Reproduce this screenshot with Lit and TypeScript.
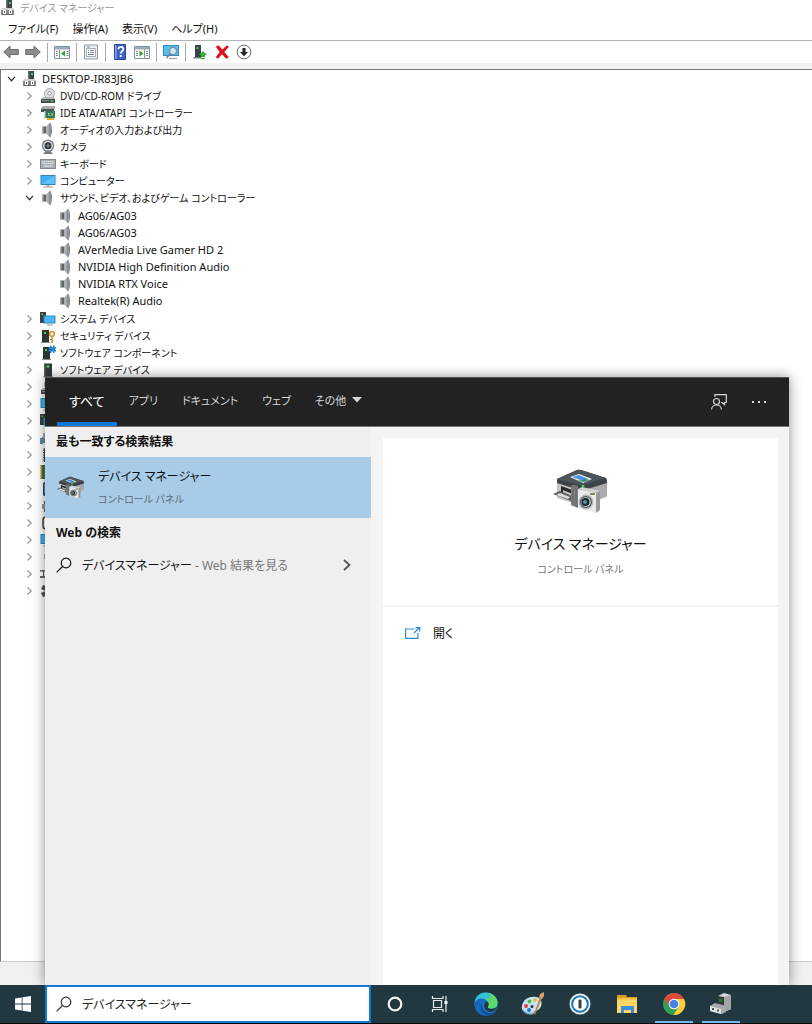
import { LitElement, html, svg, css, type TemplateResult } from "lit";
import { customElement, property, state } from "lit/decorators.js";

const speaker = svg`<path d="M2.500 4.500H6v7H2.500z" fill="#5f6469"/><path d="M2.500 4.500h1.200v7H2.500z" fill="#9a9ea1"/><path d="M6 4.500 10.500.5v15L6 11.500z" fill="#aeb2b5"/><path d="M8.800 2l1.700-1.500v15L8.800 14z" fill="#8b8f93"/><path d="M10.500 1c2 4 2 10 0 14z" fill="#74797d"/>`;
const tower = svg`<path d="M4 1.500h8V15H4z" fill="#33383b"/><path d="M4 1.500h1.500V15H4z" fill="#585e62"/><circle cx="8" cy="4.500" r="1.300" fill="#3fe34a"/><path d="M3 14.500h10v1H3z" fill="#888"/>`;
const monitor = svg`<path d="M.5 2h15v10H.5z" fill="#2f86bd"/><path d="M1.500 3h13v8h-13z" fill="#42b0f5"/><path d="M1.500 11 14.500 3v8z" fill="#62c2fb"/><path d="M6.500 12h3v1.500h-3z" fill="#aaa"/><path d="M3.500 13.500h9.500v1H3.500z" fill="#8b979e"/>`;

const art: Record<string, [string, TemplateResult]> = {
  computer: ["0 0 16 16", svg`<path d="M6 0h6v10H6z" fill="#3d4245"/><path d="M6 0h1.500v10H6z" fill="#666c70"/><rect x="9" y="2" width="2" height="2" fill="#35e04a"/><path d="M2 8h11l1 2H1z" fill="#cfd1d2"/><path d="M1 10h13v5H1z" fill="#84888b"/><path d="M2 14h11v1H2z" fill="#666"/><path d="M3 10h3v4H3zM9 10h3v4H9z" fill="#fff"/><path d="M4 11h1v2H4zM10 11h1v2h-1z" fill="#555"/>`],
  disc: ["0 0 16 16", svg`<circle cx="9.500" cy="5.500" r="5" fill="#dcdedf" stroke="#a7abad"/><circle cx="9.500" cy="5.500" r="1.800" fill="#fff" stroke="#999"/><path d="M3 9h11l1 2H1z" fill="#b4b8ba"/><path d="M1 11h14v4H1z" fill="#4a4f52"/><path d="M2 12h7v1H2z" fill="#888e92"/><circle cx="12" cy="13" r="1" fill="#3de14b"/>`],
  ide: ["0 0 16 16", svg`<path d="M1 3 3 1h12v4H1z" fill="#a9adaf"/><path d="M1 4h13v3H1z" fill="#4e5457"/><path d="M5 6h10v7H5z" fill="#2e7b4f"/><path d="M4 6h1.500v8H4z" fill="#cdd0d1"/><path d="M8 8h5v3H8z" fill="#85bd8f"/><circle cx="10.500" cy="9.500" r="1" fill="#1d5333"/><path d="M7 13h7v2H7z" fill="#e6a92d"/>`],
  speaker: ["0 0 16 16", speaker],
  camera: ["0 0 16 16", svg`<path d="m3 15 2.500-3h5L13 15z" fill="#777c80"/><circle cx="8" cy="6.800" r="6.300" fill="#82878b"/><circle cx="8" cy="6.800" r="4.800" fill="#dfe1e2"/><circle cx="8" cy="6.800" r="3.500" fill="#33383b"/><circle cx="8" cy="6.800" r="1.600" fill="#7c8488"/>`],
  keyboard: ["0 0 16 16", svg`<path d="M0 3h16v10H0z" fill="#80878c"/><path d="M1 4h14v8H1z" fill="#a9b0b4"/><path d="M2 5.500h12M2 7.500h12" stroke="#e3e6e8" stroke-dasharray="1.500 .5"/><path d="M3.500 10h9" stroke="#e3e6e8"/>`],
  monitor: ["0 0 16 16", monitor],
  system: ["0 0 16 16", svg`<path d="M0 1h6v11H0z" fill="#3b4144"/><rect x="1.500" y="2.500" width="1.500" height="1.500" fill="#35e04a"/><path d="M3.500 4.500h12v8h-12z" fill="#2c86bd"/><path d="M4.500 5.500h10v6h-10z" fill="#4bb7fa"/><path d="M7 13.500h6v1H7z" fill="#8b979e"/>`],
  security: ["0 0 16 16", svg`<path d="M2 2h7v12H2z" fill="#2e3336"/><rect x="4" y="4" width="2" height="2" fill="#35e04a"/><path d="M1 14h9v1H1z" fill="#888"/><circle cx="12" cy="6" r="2.300" fill="none" stroke="#d8973a" stroke-width="1.700"/><path d="M11.200 8h1.700v7h-1.700z" fill="#d8973a"/><path d="M10 11h2v1h-2z" fill="#b0741f"/>`],
  component: ["0 0 16 16", svg`<path d="M3 2h7v12H3z" fill="#2e3336"/><rect x="5" y="4" width="2" height="2" fill="#35e04a"/><path d="M2 14h9v1H2z" fill="#888"/><path d="M8.500 2H10V.5h1.500V2H13V.5h1.500V2H16v1.500h-1V5h1v1.500h-1.500V8H13V6.500h-1.500V8H10V6.500H8.500V5h1V3.500h-1z" fill="#2584cf"/>`],
  tower: ["0 0 16 16", tower],
  board: ["0 0 16 16", svg`<path d="M1 1h14v14H1z" fill="#3c7a46"/><path d="M1 1v14" stroke="#d6aa43" stroke-width="2" stroke-dasharray="1.500 1"/>`],
  chip: ["0 0 16 16", svg`<path d="M3 1h10v14H3z" fill="#484d50"/><path d="M3 1v14" stroke="#e4e6e7" stroke-width="2" stroke-dasharray="1.500 1"/>`],
  printer: ["0 0 16 16", svg`<path d="M2 7h12v6H2z" fill="#7b8083"/><path d="M3 3h8v5H3z" fill="#9fb4c1"/><path d="M0 8h3v6H0z" fill="#5d8da5"/>`],
  phone: ["0 0 16 16", svg`<rect x="3" y="1" width="10" height="14" rx="1.500" fill="#46525a"/><path d="M4.500 3h7v9h-7z" fill="#5eb5eb"/>`],
  mouse: ["0 0 16 16", svg`<path d="M4 3h8v11H4z" fill="#575b5e"/><path d="M2 6h3v5H2z" fill="#999"/>`],
  curve: ["0 0 16 16", svg`<rect x="3" y="2" width="10" height="12" rx="3" fill="#fff" stroke="#444" stroke-width="1.500"/>`],
  usb: ["0 0 16 16", svg`<path d="M4 5h2v5H4z" fill="#aaa"/><path d="M9 3h3v12H9z" fill="#aaa"/>`],
  drive: ["0 0 16 16", svg`<path d="M0 4h12v1.500H0zM0 10h14v2H0z" fill="#666b6e"/><path d="M3.500 5v5" stroke="#555"/>`],
  gear: ["0 0 16 16", svg`<path d="M3 2 1 6l4 2-4 2 2 4 6-2V4z" fill="#4f5356"/><circle cx="7" cy="8" r="2.500" fill="#fff"/>`],

  back: ["0 0 16 16", svg`<path d="M.7 8 7 2v3.500h8.300v5H7V14z" fill="#8d8d8d" stroke="#6c6c6c"/>`],
  forward: ["0 0 16 16", svg`<path d="M15.300 8 9 2v3.500H.7v5H9V14z" fill="#8d8d8d" stroke="#6c6c6c"/>`],
  treepane: ["0 0 16 16", svg`<path d="M.5 2.500h15v12H.5z" fill="#f8fafb" stroke="#87939b"/><path d="M1 3h14v2.500H1z" fill="#9eacb6"/><path d="M5.500 5.500V14" stroke="#87939b"/><path d="M2 7.500h2M2 9.500h2M2 11.500h2M12.500 7.500h2M12.500 9.500h2M12.500 11.500h2" stroke="#7b8b96"/><path d="m7 9.500 4-3v6z" fill="#35a421"/>`],
  actionpane: ["0 0 16 16", svg`<path d="M.5 2.500h15v12H.5z" fill="#f8fafb" stroke="#87939b"/><path d="M1 3h14v2.500H1z" fill="#9eacb6"/><path d="M10.500 5.500V14" stroke="#87939b"/><path d="M2 7.500h2M2 9.500h2M2 11.500h2M12 7.500h2M12 9.500h2M12 11.500h2" stroke="#7b8b96"/><path d="m9.500 9.500-4-3v6z" fill="#35a421"/>`],
  properties: ["0 0 16 16", svg`<path d="M1.500 1h13v14h-13z" fill="#eef1f3" stroke="#8f999f"/><path d="M3.500 4.500h9v8h-9z" fill="#fff" stroke="#a4aeb5"/><path d="M4 3h3M5 6.500h1M7 6.500h4M5 8.500h1M7 8.500h4M5 10.500h6" stroke="#6d8698"/>`],
  help: ["0 0 16 16", svg`<path d="M2.500.5h11v15h-11z" fill="#3f63c4" stroke="#2a479b"/><path d="M3 1h1.500v14H3z" fill="#8aa2e4"/><path d="M6.500 5.200c0-3.400 5-3 4.800 0 0 2-2.500 2-2.500 4.300" fill="none" stroke="#fff" stroke-width="1.800"/><path d="M7.800 11h2v2h-2z" fill="#fff"/>`],
  scan: ["0 0 16 16", svg`<path d="M0 1h16v11H0z" fill="#3189bd"/><path d="M1 2h14v9H1z" fill="#5abdf2"/><circle cx="10" cy="7" r="3.500" fill="#c6e7fa" stroke="#7d8990" stroke-width="1.200"/><path d="m7.500 9.500-4 4.500" stroke="#7a7f82" stroke-width="1.600"/><path d="M6 14.500h8" stroke="#8b979e"/>`],
  update: ["0 0 16 16", svg`<path d="M3 1h6v12H3z" fill="#3d4346"/><circle cx="5.500" cy="4" r="1.100" fill="#45e152"/><path d="M1.500 13h8v1.500h-8z" fill="#777"/><path d="m11 7 4 4h-2v2H9v-2H7zM9 14h4v1.200H9z" fill="#2bb634"/>`],
  remove: ["0 0 14 14", svg`<path d="M1.500 2.500 4 1l3.200 3.800L11.500 1l1.500 1.500L9 7l4 4.500-2.500 1.500L7 9l-3.500 4-2-1.500L5 7z" fill="#e0101e"/>`],
  disable: ["0 0 16 16", svg`<circle cx="8" cy="8" r="6.900" fill="#fafafa" stroke="#666"/><path d="M6.500 4h3v4H12l-4 4.200L4 8h2.500z" fill="#222"/>`],

  search: ["0 0 16 16", svg`<circle cx="10" cy="6" r="4.800" fill="none" stroke="currentColor" stroke-width="1.200"/><path d="M6.500 9.500.6 15.400" stroke="currentColor" stroke-width="1.200"/>`],
  chevron: ["0 0 10 14", svg`<path d="m2 2 5.500 5L2 12" fill="none" stroke="currentColor" stroke-width="1.800"/>`],
  caret: ["0 0 10 6", svg`<path d="M0 0h10L5 5.500z" fill="currentColor"/>`],
  feedback: ["0 0 16 16", svg`<g fill="none" stroke="currentColor" stroke-width="1.200"><circle cx="5.500" cy="7.500" r="3"/><path d="M.6 15.500c0-6 9.800-6 9.800 0M4 3V.7h11.300v7.800h-1.800v2.200L11 8.500h-1"/></g>`],
  more: ["0 0 16 4", svg`<path d="M1 1h2v2H1zM7 1h2v2H7zM13 1h2v2h-2z" fill="currentColor"/>`],
  open: ["0 0 16 12", svg`<path d="M9.500 2H.6v9.400h12.300V6" fill="none" stroke="#2b8bdc" stroke-width="1.200"/><path d="M9 6l5-5M10.500.6h4.300v4" fill="none" stroke="#2b8bdc" stroke-width="1.200"/>`],
  devices: ["0 0 56 48", svg`<path d="M4 12 27 2l27 9v18L29 38 4 30z" fill="#c2c4c6"/><path d="m29 21 25-8v15l-19 6-6-3z" fill="#a9abad"/><path d="M4 11 24 2q2-.7 4 0l25 8q1 1 1 5l-23 7q-3 1-5 0L4 15z" fill="#3c4348"/><path d="M4 11 24 2q2-.7 4 0l25 8-23 7q-2 .5-4 0z" fill="#4d555a"/><path d="m17 9 9-3 13 5-9 4z" fill="#e8f3fb"/><path d="m19 9 7-2 9 4-5 2z" fill="#4d93dd"/><path d="m24 13 9-2 4 1-6 2z" fill="#3f916c"/><path d="m8 18 14 5v7L8 25z" fill="#25292c"/><path d="m10 22 10 4v3l-10-4z" fill="#b9bcbe"/><path d="M0 26 7 23l14 6v3l-3 1z" fill="#555b5f"/><path d="m3 27 4-2 10 4-2 2z" fill="#d9dbdc"/><path d="M18 18q2-2 7 0v22l-7-3z" fill="#7b7f82"/><path d="M20 18v20M23 18v21" stroke="#55595c" stroke-width=".7"/><path d="m25 21 18 4v20L25 40z" fill="#e9eaeb"/><path d="m25 21 4-2 18 4-4 2z" fill="#cfd1d3"/><path d="m43 25 4-2v19l-4 3z" fill="#96999b"/><circle cx="33" cy="34" r="7.500" fill="#b5b8ba"/><circle cx="33" cy="34" r="6" fill="#53595d"/><circle cx="33" cy="34" r="4.800" fill="#c9cccd"/><circle cx="32.500" cy="34" r="4" fill="#202528"/><circle cx="32" cy="34" r="2" fill="#4c98a4"/><circle cx="30" cy="18" r="1.300" fill="#3ddd4c"/><path d="M37 25h5v2h-5z" fill="#8b8461"/>`],

  windows: ["0 0 16 16", svg`<path d="M0 2.400 6.700 1.400v6.200H0zM7.500 1.300 16 0v7.600H7.500zM0 8.400h6.700v6.200L0 13.600zM7.500 8.400H16V16l-8.500-1.300z" fill="#fff"/>`],
  cortana: ["0 0 16 16", svg`<circle cx="8" cy="8" r="6.300" fill="none" stroke="#f1f3f3" stroke-width="2.200"/>`],
  taskview: ["0 0 18 16", svg`<g fill="none" stroke="#e5e9ea" stroke-width="1.200"><path d="M2.500 4.500h8v7h-8zM1.500 0v2.500H12V0M1.500 16v-2.500H12V16M15 0v16"/></g><path d="M13.500 5h3v3h-3z" fill="#fff"/>`],
  edge: ["0 0 24 24", svg`<circle cx="12" cy="12" r="11.500" fill="#1583d3"/><path d="M.8 10C2-2 20-3 23.200 9c1.500 6-2.500 8-6.700 7.700-2.200-.1-3.200-1-2.500-2.200C17 9 9 4 .8 10z" fill="#35c1d8"/><path d="M14 1c7 1 11 7 9 12-1 3-4 4-7 3.700-2-.2-2.500-1.200-2-2.200C16 11 14 8 11 7c6-1 8-3 3-6z" fill="#5ddb66"/><path d="M12.500 9C6 9 5 20 14 23.300 6 24.500.5 19 .6 12 2 6 9 5 12.500 9z" fill="#1469bd"/><path d="M10 10c-4 4 0 11 6 11 3 0 5-1 6-2-2 3-5 4.500-8 4.500C6 22 5 13 10 10z" fill="#0d4b9b"/><path d="M11.500 9.500c3 0 4 2.500 2.500 5-.6 1 .5 2 2.500 2.200 3 .2 5-.7 6-1.700-1 4-4 5.500-7 5-5-.7-7-7-4-10.500z" fill="#233841"/>`],
  paint: ["0 0 24 24", svg`<path d="M1 14C2 7 9 4 15 5c6 1 7 7 4 11-2 3-3 2-5 3-1 3-3 4-6 3-5-1-8-4-7-8z" fill="#c6e4f4"/><path d="M2 17c3 4 8 5 11 2-1 3-4 4-7 3-3-1-4-3-4-5z" fill="#79b2d1"/><circle cx="5" cy="14" r="2" fill="#e33d39"/><circle cx="8.500" cy="9.500" r="2" fill="#4eb84b"/><circle cx="14" cy="8" r="1.800" fill="#eebb25"/><circle cx="8" cy="18" r="2" fill="#2c6ed3"/><circle cx="11" cy="14.500" r="1.500" fill="#263942"/><path d="m19 5 2 1-7 17-1-1z" fill="#ca7c35"/><path d="m18 6 1-4 4-2v4l-2 3z" fill="#d9a365"/>`],
  key: ["0 0 24 24", svg`<circle cx="12" cy="12" r="10.500" fill="#eceef0"/><circle cx="12" cy="12" r="7.800" fill="#fff" stroke="#2178b8" stroke-width="2"/><rect x="10.500" y="7.500" width="3" height="9" rx="1" fill="#33424c"/>`],
  folder: ["0 0 24 24", svg`<path d="M2 3h9l1 2h10v6H2z" fill="#d99b18"/><path d="M2 6h20v15H2z" fill="#ffd766"/><path d="M2 6h20v2H2z" fill="#f5c44c"/><path d="M6 21v-6q0-1 1-1h11q1 0 1 1v6h-3v-3H9v3z" fill="#398fda"/>`],
  chrome: ["0 0 24 24", svg`<circle cx="12" cy="12" r="11" fill="#34a054"/><path d="M12 1a11 11 0 0 1 10 6H12L7.500 14.500 2.400 6.800A11 11 0 0 1 12 1z" fill="#df4a3c"/><path d="M22 7A11 11 0 0 1 11.500 23L16.700 14.500 12 7z" fill="#fbcd3e"/><circle cx="12" cy="12" r="5.300" fill="#fff"/><circle cx="12" cy="12" r="4.300" fill="#4382ed"/>`],
  devmgr: ["0 0 24 24", svg`<path d="m9 4 6-3 7 2v14l-7 3-6-2z" fill="#d6d7d7"/><path d="m15 5 7-2v14l-7 3z" fill="#a3a6a6"/><path d="m9 4 6 1v11H9z" fill="#363b3e"/><rect x="10" y="7" width="3" height="3" fill="#187b29"/><path d="m1 14 5-3 11 3v6l-4 2-12-3z" fill="#a7a9aa"/><path d="m1 14 11 3v5L1 19z" fill="#e0e1e1"/><path d="M3 16h2v2H3zM8 17.500h2v2H8z" fill="#555"/>`],
};

@customElement("ui-icon")
export class UiIcon extends LitElement {
  @property() name = "";
  static styles = css`
    :host { display: block; flex: none; width: 16px; height: 16px; }
    svg { display: block; width: 100%; height: 100%; overflow: visible; }
  `;
  render() {
    const [box, body] = art[this.name];
    return html`<svg viewBox=${box} aria-hidden="true">${body}</svg>`;
  }
}

interface Device { icon: string; label?: string; children?: Device[]; }

const devices: Device[] = [
  { icon: "disc", label: "DVD/CD-ROM ドライブ" },
  { icon: "ide", label: "IDE ATA/ATAPI コントローラー" },
  { icon: "speaker", label: "オーディオの入力および出力" },
  { icon: "camera", label: "カメラ" },
  { icon: "keyboard", label: "キーボード" },
  { icon: "monitor", label: "コンピューター" },
  {
    icon: "speaker",
    label: "サウンド、ビデオ、およびゲーム コントローラー",
    children: ["AG06/AG03", "AG06/AG03", "AVerMedia Live Gamer HD 2", "NVIDIA High Definition Audio", "NVIDIA RTX Voice", "Realtek(R) Audio"]
      .map((label) => ({ icon: "speaker", label })),
  },
  { icon: "system", label: "システム デバイス" },
  { icon: "security", label: "セキュリティ デバイス" },
  { icon: "component", label: "ソフトウェア コンポーネント" },
  { icon: "tower", label: "ソフトウェア デバイス" },
  ...["disc", "monitor", "system", "printer", "chip", "board", "phone", "mouse", "curve", "monitor", "usb", "drive", "gear"]
    .map((icon) => ({ icon })),
];

@customElement("device-tree")
export class DeviceTree extends LitElement {
  static styles = css`
    :host { display: block; }
    ul { list-style: none; margin: 0; padding: 0; }
    .branch { padding-left: 18px; font-size: 10px; }
    .leaves { padding: 1px 0 1px 18px; font-size: 11px; }
    .row { display: flex; align-items: center; height: 17px; gap: 4px; white-space: nowrap; line-height: 16px; }
    .toggle { display: grid; place-items: center; width: 14px; height: 16px; padding: 0; border: 0; background: none; color: #9a9a9a; }
    .toggle ui-icon { width: 7px; height: 10px; }
    .open { color: #333; }
    .open ui-icon { transform: rotate(90deg); }
    .spacer { width: 14px; }
  `;

  private row(d: Device): TemplateResult {
    const open = !!d.children;
    return html`<li>
      <div class="row">
        <button class="toggle ${open ? "open" : ""}" aria-expanded=${open}><ui-icon name="chevron"></ui-icon></button>
        <ui-icon name=${d.icon}></ui-icon><span>${d.label}</span>
      </div>
      ${open ? html`<ul class="leaves">${d.children!.map((c) => html`<li class="row"><span class="spacer"></span><ui-icon name=${c.icon}></ui-icon><span>${c.label}</span></li>`)}</ul>` : ""}
    </li>`;
  }

  render() {
    return html`
      <div class="row">
        <button class="toggle open" aria-expanded="true"><ui-icon name="chevron"></ui-icon></button>
        <ui-icon name="computer"></ui-icon><span>DESKTOP-IR83JB6</span>
      </div>
      <ul class="branch">${devices.map((d) => this.row(d))}</ul>
    `;
  }
}

@customElement("search-flyout")
export class SearchFlyout extends LitElement {
  @state() private tab = "すべて";
  static styles = css`
    :host { display: flex; flex-direction: column; background: #f4f4f4; font-size: 12px; color: #111; border-top: 1px solid #555; box-shadow: 0 0 12px rgba(0, 0, 0, 0.45); }
    button { font: inherit; color: inherit; border: 0; padding: 0; background: none; text-align: left; }
    h2, h3, p { margin: 0; font-weight: 400; }
    header { display: flex; justify-content: space-between; height: 49px; background: #222; color: #d6d6d6; border-bottom: 1px solid #777; box-sizing: border-box; padding: 0 22px 0 12px; }
    .tabs { display: flex; white-space: nowrap; }
    .tab { display: flex; align-items: center; gap: 6px; padding: 0 12px; border-bottom: 4px solid transparent; font-size: 11px; }
    .tab.on { color: #fff; border-bottom-color: #0078d7; font-size: 13px; }
    .caret { width: 10px; height: 6px; }
    .tools { display: flex; align-items: center; gap: 24px; }
    .main { flex: 1; display: grid; grid-template-columns: 326px 1fr; }
    .results { background: #efefef; }
    .heading { font-size: 12px; font-weight: 700; line-height: 30px; padding: 0 11px; }
    .hit { display: flex; align-items: center; gap: 13px; width: 100%; height: 61px; padding: 0 12px; background: #a8cbe8; }
    .hit ui-icon { width: 28px; height: 26px; }
    .name { display: block; line-height: 22px; }
    .sub { display: block; font-size: 10px; line-height: 22px; color: #5b6b78; }
    .web { display: flex; align-items: center; gap: 10px; width: 100%; height: 34px; padding: 0 19px 0 11px; white-space: nowrap; }
    .text { flex: 1; }
    .hint { color: #777; }
    .go { width: 10px; height: 14px; color: #555; }
    .detail { background: #fff; margin: 11px 11px 0 12px; }
    .card { display: flex; flex-direction: column; align-items: center; height: 169px; box-sizing: border-box; padding-top: 30px; border-bottom: 2px solid #f2f2f2; }
    .card ui-icon { width: 56px; height: 48px; }
    .card h2 { font-size: 14px; line-height: 26px; margin-top: 15px; }
    .card .sub { color: #777; line-height: 24px; }
    .action { display: flex; align-items: center; gap: 12px; width: 100%; height: 52px; padding: 0 22px; }
    .action ui-icon { height: 12px; }
  `;

  render() {
    const tabs = ["すべて", "アプリ", "ドキュメント", "ウェブ", "その他"];
    return html`
      <header>
        <div class="tabs">${tabs.map((t) => html`
          <button class="tab ${t === this.tab ? "on" : ""}" @click=${() => (this.tab = t)}>${t}${t === "その他" ? html`<ui-icon class="caret" name="caret"></ui-icon>` : ""}</button>`)}
        </div>
        <div class="tools">
          <button><ui-icon name="feedback"></ui-icon></button>
          <button><ui-icon name="more"></ui-icon></button>
        </div>
      </header>
      <div class="main">
        <section class="results">
          <h3 class="heading">最も一致する検索結果</h3>
          <button class="hit"><ui-icon name="devices"></ui-icon><span><span class="name">デバイス マネージャー</span><span class="sub">コントロール パネル</span></span></button>
          <h3 class="heading">Web の検索</h3>
          <button class="web"><ui-icon name="search"></ui-icon><span class="text">デバイスマネージャー<span class="hint"> - Web 結果を見る</span></span><ui-icon class="go" name="chevron"></ui-icon></button>
        </section>
        <section class="detail">
          <div class="card"><ui-icon name="devices"></ui-icon><h2>デバイス マネージャー</h2><p class="sub">コントロール パネル</p></div>
          <button class="action"><ui-icon name="open"></ui-icon>開く</button>
        </section>
      </div>
    `;
  }
}

@customElement("task-bar")
export class TaskBar extends LitElement {
  static styles = css`
    :host { display: flex; height: 39px; box-sizing: border-box; background: #223841; border-bottom: 1px solid #05090b; }
    button { display: grid; place-items: center; padding: 0; border: 0; background: none; width: 47px; }
    .start { width: 45px; }
    .box { display: flex; align-items: center; gap: 10px; width: 326px; box-sizing: border-box; border: 2px solid #0f7bd8; padding: 0 9px; background: #fff; color: #333; }
    input { flex: 1; min-width: 0; height: 20px; border: 0; padding: 0; outline: 0; background: none; font: inherit; font-size: 12px; font-feature-settings: inherit; color: #222; }
    .apps { display: flex; }
    .app ui-icon { width: 24px; height: 24px; }
    .running { grid-template-rows: 1fr 2px; padding-top: 2px; }
    .running::after { content: ""; width: 38px; height: 2px; background: #76b9ed; }
    .view { width: 44px; }
    .view ui-icon { width: 18px; }
  `;
  render() {
    const apps = ["edge", "paint", "key", "folder", "chrome", "devmgr"];
    return html`
      <button class="start"><ui-icon name="windows"></ui-icon></button>
      <label class="box"><ui-icon name="search"></ui-icon><input type="text" value="デバイスマネージャー"></label>
      <div class="apps">
        <button><ui-icon name="cortana"></ui-icon></button>
        <button class="view"><ui-icon name="taskview"></ui-icon></button>
        ${apps.map((a, i) => html`<button class="app ${i > 3 ? "running" : ""}"><ui-icon name=${a}></ui-icon></button>`)}
      </div>
    `;
  }
}

@customElement("app-root")
export class AppRoot extends LitElement {
  static styles = css`
    :host { position: relative; display: flex; flex-direction: column; min-height: 100vh; overflow: hidden; background: #f0f0f0; color: #111; font: 11px "Noto Sans", "Noto Sans CJK JP", sans-serif; font-feature-settings: "palt"; }
    .title { display: flex; align-items: center; gap: 4px; height: 16px; background: #fff; color: #999; }
    .title h1 { margin: 0; font: inherit; font-size: 10px; line-height: 16px; }
    nav { display: flex; gap: 14px; height: 24px; padding: 0 8px; background: #fff; border-bottom: 1px solid #b4b4b4; }
    nav button { font: inherit; color: inherit; padding: 0; border: 0; background: none; }
    .toolbar { display: flex; align-items: center; gap: 6px; height: 22px; padding: 0 3px; background: #fff; }
    .toolbar button { padding: 0; border: 0; background: none; }
    .sep { width: 1px; height: 19px; background: #aaa; }
    .view { flex: 1; margin-top: 6px; border-top: 1px solid #777; border-left: 1px solid #777; border-bottom: 1px solid #ccc; background: #fff; padding: 0 3px; }
    .status { height: 23px; }
    search-flyout { position: absolute; left: 45px; right: 23px; top: 377px; bottom: 39px; }
    task-bar { position: relative; }
  `;
  render() {
    const tools = ["back", "forward", "", "treepane", "", "properties", "", "help", "actionpane", "", "scan", "", "update", "remove", "disable"];
    return html`
      <div class="title"><ui-icon name="computer"></ui-icon><h1>デバイス マネージャー</h1></div>
      <nav>${["ファイル(F)", "操作(A)", "表示(V)", "ヘルプ(H)"].map((m) => html`<button>${m}</button>`)}</nav>
      <div class="toolbar">${tools.map((t) => (t ? html`<button><ui-icon name=${t}></ui-icon></button>` : html`<span class="sep"></span>`))}</div>
      <div class="view"><device-tree></device-tree></div>
      <div class="status"></div>
      <search-flyout></search-flyout>
      <task-bar></task-bar>
    `;
  }
}
